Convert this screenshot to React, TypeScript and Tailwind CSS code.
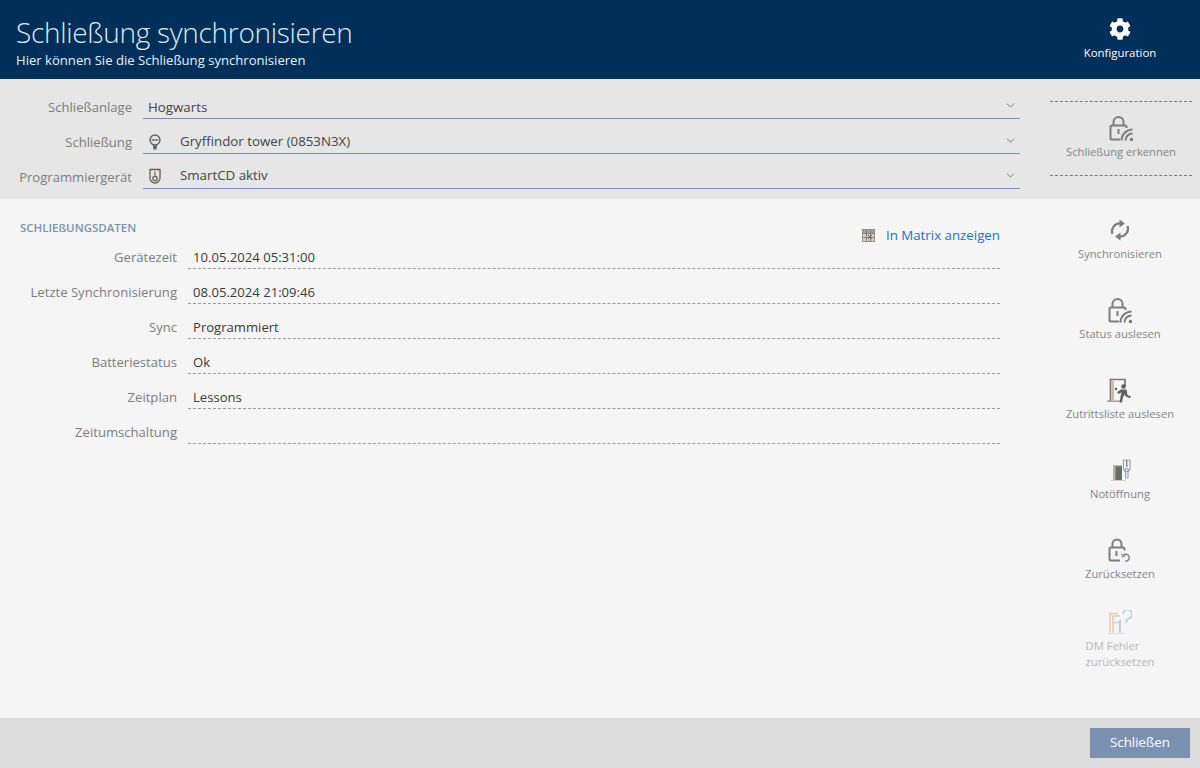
import { ChevronDown } from 'lucide-react';
import { FaCog } from 'react-icons/fa';
import type { ReactNode } from 'react';

const font = { fontFamily: '"Open Sans", "Noto Sans", sans-serif' };

function LockWave() {
  return (
    <svg width="24" height="25" viewBox="0 0 24 25" fill="none" stroke="#7d7d7d" strokeWidth="2">
      <path d="M11 23.500H3a1.500 1.500 0 0 1-1.500-1.500V11a1.500 1.500 0 0 1 1.500-1.500h13a1.500 1.500 0 0 1 1.500 1.500v1" />
      <path d="M4.500 9.500V6a5 5 0 0 1 10 0v3.500" />
      <path d="M9.500 13v5" />
      <path d="M12.500 24.500a11 11 0 0 1 11-11M16.500 24.500a7 7 0 0 1 7-7" strokeWidth="2" />
      <circle cx="22.500" cy="23.500" r="1.800" fill="#7d7d7d" stroke="none" />
    </svg>
  );
}

function LockReset() {
  return (
    <svg width="24" height="25" viewBox="0 0 24 25" fill="none" stroke="#7d7d7d" strokeWidth="2">
      <path d="M12 22.500H3a1.500 1.500 0 0 1-1.500-1.500V11a1.500 1.500 0 0 1 1.500-1.500h12a1.500 1.500 0 0 1 1.500 1.500v1.500" />
      <path d="M4.500 9.500V6a4.500 4.500 0 0 1 9 0v3.500" />
      <path d="M8.500 13v5" />
      <path d="M15.500 17a3.500 3.500 0 1 1 1.500 6" strokeWidth="1.300" />
      <path d="M13.500 15.500l1.300 3.500 2.700-1.800" strokeWidth="1.100" />
    </svg>
  );
}

function SyncArrows() {
  return (
    <svg width="20" height="22" viewBox="0 0 20 22" fill="none">
      <path d="M2.500 15A7.800 7.800 0 0 1 10.500 4.500" stroke="#7d7d7d" strokeWidth="2.200" />
      <path d="M9.500 0.500L15 4.500L9.500 8.500z" fill="#7d7d7d" />
      <path d="M17.500 7A7.800 7.800 0 0 1 9.500 17.500" stroke="#7d7d7d" strokeWidth="2.200" />
      <path d="M10.500 13.500L5 17.500L10.500 21.500z" fill="#7d7d7d" />
    </svg>
  );
}

function DoorRunner() {
  return (
    <svg width="26" height="25" viewBox="0 0 26 25" fill="none">
      <path d="M3.500 23V1.500h14.500v7" stroke="#7f756c" strokeWidth="1.700" />
      <path d="M6 3v19" stroke="#b7a894" strokeWidth="1.500" />
      <path d="M0 23.200h13" stroke="#a89a8c" strokeWidth="1.500" />
      <circle cx="9" cy="11" r="1.300" fill="#5f5f5f" />
      <circle cx="16.500" cy="8.500" r="2.300" fill="#5f5f5f" />
      <path d="M14 11.500h5.500l1 5.500 3.500 1.500-1 1.700-4.500-2-1-2-1.500 3-1 5.300h-2.300l1-7 1-3.500-1.700 1.500h-2.500v-1.800z" fill="#5f5f5f" />
    </svg>
  );
}

function DoorKey() {
  return (
    <svg width="24" height="24" viewBox="0 0 24 24" fill="none">
      <path d="M5 7h9v15H5z" fill="#b4b4b4" />
      <path d="M7.500 8.500H14V22H7.500z" fill="#66705f" />
      <path d="M3 22.500h15" stroke="#d6d0c6" strokeWidth="1" />
      <path d="M15.500 2v9l2 3v6h2.500v-6l2-3V2z" stroke="#8fa6c8" strokeWidth="1.200" />
      <path d="M18.700 2v7" stroke="#9b8d7e" strokeWidth="1.600" />
      <circle cx="18.700" cy="12" r="1.600" stroke="#8a8a8a" />
    </svg>
  );
}

function DmError() {
  return (
    <svg width="24" height="24" viewBox="0 0 24 24" fill="none">
      <path d="M2 22.500V3.500h8" stroke="#ecc8ae" strokeWidth="1.500" />
      <path d="M5 22.500V6h7M5 12.500h6" stroke="#d9cbbd" strokeWidth="1.500" />
      <path d="M12 10v12.500" stroke="#b9cdea" strokeWidth="2" />
      <path d="M15 4a4.500 4.500 0 1 1 6 4.500L18.500 10v3" stroke="#b9cdea" strokeWidth="1.700" />
      <path d="M0 23.500h17" stroke="#e3dfda" strokeWidth="1" />
    </svg>
  );
}

function Bulb() {
  return (
    <svg width="14" height="16" viewBox="0 0 14 16" fill="none" stroke="#5e5e5e" strokeWidth="1.300">
      <circle cx="7" cy="6" r="5" />
      <path d="M3.500 6h7" />
      <path d="M5.500 11l.5 2h2l.5-2" />
      <circle cx="7" cy="14" r="1.200" />
    </svg>
  );
}

function Shield() {
  return (
    <svg width="14" height="16" viewBox="0 0 14 16" fill="none" stroke="#6a5d4f" strokeWidth="1.300">
      <path d="M2 1.500h10v8.500a5 5 0 0 1-10 0z" />
      <path d="M7 3.500v5" stroke="#a58a62" strokeWidth="1.600" />
      <circle cx="7" cy="10.500" r="2.200" />
    </svg>
  );
}

function MatrixIcon() {
  return (
    <svg width="13" height="13" viewBox="0 0 13 13" fill="none">
      <rect x="0.500" y="0.500" width="12" height="12" fill="#d8cfc4" stroke="#9a8f84" />
      <path d="M1 1h11v3H1z" fill="#a3a3a3" />
      <path d="M1 4.500h11M1 8.500h11M4.500 1v11M8.500 1v11" stroke="#857f78" strokeWidth="1" />
      <path d="M6 6l4 4M10 6l-4 4" stroke="#6a6a6a" strokeWidth="1" />
    </svg>
  );
}

function SelectRow({ label, icon, value, shift }: { label: string; icon?: ReactNode; value: string; shift: string }) {
  return (
    <div className="flex h-[35px] items-end">
      <div className="w-[132px] shrink-0 pb-[2px] text-right text-[13.100px] leading-[20px] text-[#7c7c7c]">{label}</div>
      <div className={`ml-[11px] flex h-[30px] flex-1 items-center border-b border-[#7b91b2] pr-[3px] ${shift}`}>
        {icon ? <span className="ml-[5px] flex w-[32px] shrink-0 items-center">{icon}</span> : <span className="w-[5px]" />}
        <span className="text-[13.300px] text-[#444444]">{value}</span>
        <ChevronDown className="mb-[6px] ml-auto h-[13px] w-[13px] self-end text-[#666666]" strokeWidth={1.500} />
      </div>
    </div>
  );
}

function DataRow({ label, value }: { label: string; value?: string }) {
  return (
    <div className="flex h-[35px] items-end">
      <div className="w-[177px] shrink-0 pb-[2px] text-right text-[13.100px] leading-[20px] text-[#7c7c7c]">{label}</div>
      <div className="ml-[11px] flex h-[25px] flex-1 items-center border-b border-dashed border-[#9a9a9a] pt-[3px] pl-[5px] text-[13.100px] text-[#3a3a3a]">
        {value}
      </div>
    </div>
  );
}

function SideAction({ icon, label, muted, className }: { icon: ReactNode; label: ReactNode; muted?: boolean; className?: string }) {
  return (
    <div className={`flex h-[80px] flex-col items-center ${className ?? ''}`}>
      <div className="flex h-[26px] items-center justify-center">{icon}</div>
      <div className={`mt-[3px] text-center text-[11.200px] leading-[16px] ${muted ? 'text-[#b5b5b5]' : 'text-[#858585]'}`}>{label}</div>
    </div>
  );
}

export default function App() {
  return (
    <div className="flex h-[768px] w-[1200px] flex-col overflow-hidden bg-[#f5f5f5]" style={font}>
      {/* Header */}
      <div className="flex h-[79px] shrink-0 bg-[#002f5a] text-white">
        <div className="flex-1 pl-[16px]">
          <h1 className="pt-[13px] text-[28px] leading-[38px] font-light tracking-[-0.3px] text-[#dcebf5]">Schließung synchronisieren</h1>
          <p className="pt-[1px] text-[13.100px] leading-[16px] text-[#e6f2fa]">Hier können Sie die Schließung synchronisieren</p>
        </div>
        <div className="flex w-[160px] flex-col items-center pt-[18px]">
          <FaCog className="h-[22px] w-[22px] text-white" />
          <span className="mt-[3px] text-[11.400px] leading-[20px]">Konfiguration</span>
        </div>
      </div>

      {/* Selection band */}
      <div className="flex h-[120px] shrink-0 bg-[#e6e6e6]">
        <div className="w-[1020px] shrink-0 pt-[5px]">
          <SelectRow label="Schließanlage" value="Hogwarts" shift="pt-[8px]" />
          <SelectRow label="Schließung" icon={<Bulb />} value="Gryffindor tower (0853N3X)" shift="pt-[6px]" />
          <SelectRow label="Programmiergerät" icon={<Shield />} value="SmartCD aktiv" shift="pt-[4px]" />
        </div>
        <div className="mt-[22px] ml-[30px] flex h-[75px] w-[142px] flex-col items-center border-y border-dashed border-[#7a7a7a] pt-[14px]">
          <LockWave />
          <span className="mt-[3px] text-[11.200px] leading-[16px] text-[#858585]">Schließung erkennen</span>
        </div>
      </div>

      {/* Content */}
      <div className="flex flex-1">
        <div className="w-[1000px] shrink-0 pt-[20px]">
          <div className="relative">
            <h2 className="pl-[20px] text-[11.500px] leading-[18px] font-semibold text-[#7b91b2]">SCHLIEßUNGSDATEN</h2>
            <div className="absolute top-[6px] right-0 flex items-center gap-[11px]">
              <MatrixIcon />
              <span className="text-[13.300px] leading-[20px] text-[#1f6fd0]">In Matrix anzeigen</span>
            </div>
          </div>
          <div className="-mt-[3px]">
            <DataRow label="Gerätezeit" value="10.05.2024 05:31:00" />
            <DataRow label="Letzte Synchronisierung" value="08.05.2024 21:09:46" />
            <DataRow label="Sync" value="Programmiert" />
            <DataRow label="Batteriestatus" value="Ok" />
            <DataRow label="Zeitplan" value="Lessons" />
            <DataRow label="Zeitumschaltung" />
          </div>
        </div>
        <div className="flex flex-1 flex-col items-center pt-[18px] pl-[40px]">
          <SideAction icon={<SyncArrows />} label="Synchronisieren" />
          <SideAction icon={<LockWave />} label="Status auslesen" />
          <SideAction icon={<DoorRunner />} label="Zutrittsliste auslesen" />
          <SideAction icon={<DoorKey />} label="Notöffnung" />
          <SideAction icon={<LockReset />} label="Zurücksetzen" />
          <SideAction
            muted
            className="-mt-[8px]"
            icon={<DmError />}
            label={<span className="block text-left">DM Fehler<br />zurücksetzen</span>}
          />
        </div>
      </div>

      {/* Footer */}
      <div className="flex h-[50px] shrink-0 items-start justify-end bg-[#dcdcdc] pt-[10px] pr-[10px]">
        <button className="h-[30px] w-[100px] bg-[#7b91b2] text-[13.300px] text-white">Schließen</button>
      </div>
    </div>
  );
}
